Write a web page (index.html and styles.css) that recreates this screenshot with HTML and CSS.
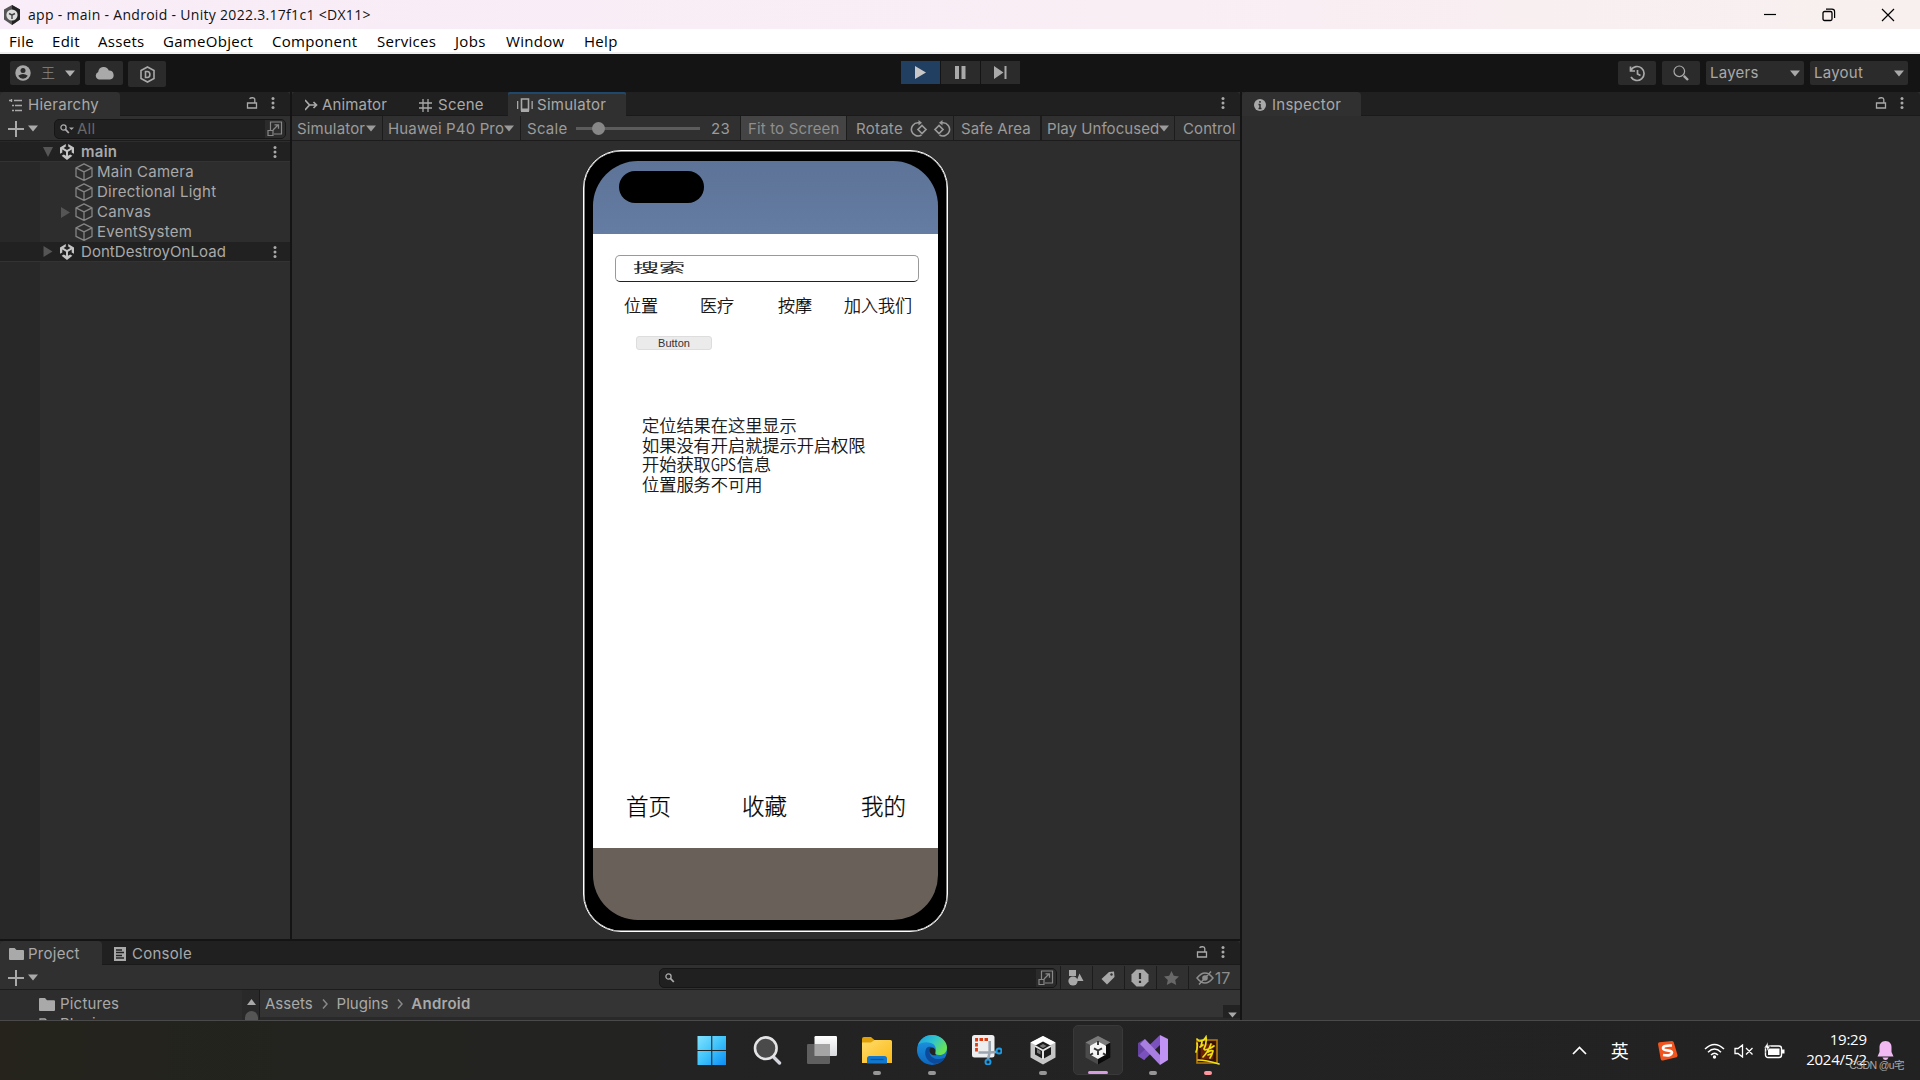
FILE: index.html
```html
<!DOCTYPE html>
<html lang="zh-CN">
<head>
<meta charset="utf-8">
<title>app - main - Android - Unity 2022.3.17f1c1</title>
<link rel="stylesheet" href="styles.css">
</head>
<body>
<svg class="defs" aria-hidden="true">
  <defs>
    <linearGradient id="gWin" x1="0" y1="0" x2="1" y2="1"><stop offset="0" stop-color="#82e2fd"/><stop offset=".5" stop-color="#3fc3fb"/><stop offset="1" stop-color="#0a8df6"/></linearGradient>
    <linearGradient id="gFolder" x1="0" y1="0" x2="1" y2="1"><stop offset="0" stop-color="#ffdc6c"/><stop offset="1" stop-color="#fbb915"/></linearGradient>
    <linearGradient id="gEdgeTop" x1="0" y1="0" x2="1" y2=".6"><stop offset="0" stop-color="#1a9be0"/><stop offset=".5" stop-color="#2fc3cf"/><stop offset="1" stop-color="#6be34f"/></linearGradient>
    <linearGradient id="gEdgeLow" x1="0" y1="0" x2="0" y2="1"><stop offset="0" stop-color="#1f9be4"/><stop offset="1" stop-color="#0d66bd"/></linearGradient>
    <linearGradient id="gWhite" x1="0" y1="0" x2="0" y2="1"><stop offset="0" stop-color="#fff"/><stop offset="1" stop-color="#d9dade"/></linearGradient>
    <symbol id="lock" viewBox="0 0 12 12"><path d="M1.500 6h9v5h-9zM3.500 1.800C5 .3 8.800 .3 8.800 2.500V6" fill="none" stroke="currentColor" stroke-width="1.300"/></symbol>
    <symbol id="kebab" viewBox="0 0 4 12"><circle cx="2" cy="1.600" r="1.500"/><circle cx="2" cy="6" r="1.500"/><circle cx="2" cy="10.400" r="1.500"/></symbol>
    <symbol id="down" viewBox="0 0 10 7"><path d="M0 .5h10L5 6.500z"/></symbol>
    <symbol id="plus" viewBox="0 0 16 16"><path d="M7 0h2v7h7v2H9v7H7V9H0V7h7z"/></symbol>
    <symbol id="find" viewBox="0 0 12 10"><circle cx="3.500" cy="3.500" r="2.600" fill="none" stroke="currentColor" stroke-width="1.300"/><path d="M5.400 5.400 8.800 9" stroke="currentColor" stroke-width="1.800"/></symbol>
    <symbol id="popout" viewBox="0 0 16 16"><path d="M3.500 9V1h11v12H7M1 9.500h5v5H1z" fill="none" stroke="currentColor" stroke-width="1.200"/><path d="M6 9l5-5M7.500 3.800h4v4" fill="none" stroke="currentColor" stroke-width="1.300"/></symbol>
    <symbol id="cube" viewBox="0 0 18 18"><path d="M9 .8 17 4.800v8.600L9 17.400 1 13.400V4.800zM1 4.800 9 8.800l8-4M9 8.800v8.600" fill="none" stroke="currentColor" stroke-width="1.300" stroke-linejoin="round"/></symbol>
    <symbol id="unity" viewBox="0 0 16 16"><path d="M6.800 0v2.600L4.600 4 8 6.100 11.400 4 9.200 2.600V0L15 3.400v6.400l-2.300-1.300V5.600L9 7.800v3.900l2.200-1.300 2.200 1.300L8 16l-5.400-4.300 2.200-1.300L7 11.700V7.800L3.300 5.600v2.900L1 9.800V3.400z"/></symbol>
    <symbol id="folder" viewBox="0 0 16 12" preserveAspectRatio="none"><path d="M0 1q0-1 1-1h5l2 2h7q1 0 1 1v8q0 1-1 1H1q-1 0-1-1z"/></symbol>
    <symbol id="crumb" viewBox="0 0 6 10"><path d="M1 .5 5 5 1 9.500" fill="none" stroke="#888" stroke-width="1.500"/></symbol>
    <symbol id="rotate" viewBox="0 0 18 18"><path d="M9.500 2.800H8a6.600 6.600 0 1 0 3.500 12.200" fill="none" stroke="currentColor" stroke-width="1.600"/><path d="M8.500 0 12 2.800 8.500 5.600z"/><path d="M12 5.500 16 9.500l-4 4-4-4z" fill="none" stroke="currentColor" stroke-width="1.700"/></symbol>
  </defs>
</svg>

<header class="titlebar">
  <svg class="app-icon" viewBox="0 0 18 20"><path d="M9 0l8 4.500v10L9 20l-8-5.500v-10z" fill="#555"/><path d="M9 0l8 4.500v10L9 20V10z" fill="#222"/><circle cx="9" cy="10" r="5.600" fill="#ddd"/><path d="M9 10v4M9 10 6 8.500M9 10l3-1.500" stroke="#444" stroke-width="1.400"/></svg>
  <span class="title-text">app - main - Android - Unity 2022.3.17f1c1 &lt;DX11&gt;</span>
  <div class="window-controls">
    <svg viewBox="0 0 14 14"><path d="M1 6.500h12" stroke="#000" stroke-width="1.200"/></svg>
    <svg viewBox="0 0 14 14"><rect x="1" y="3.500" width="9" height="9" rx="1.500" fill="none" stroke="#000" stroke-width="1.300"/><path d="M4 1.200h6q2.600 0 2.600 2.600V10" fill="none" stroke="#000" stroke-width="1.200"/></svg>
    <svg viewBox="0 0 14 14"><path d="M1 1l12 12M13 1 1 13" stroke="#000" stroke-width="1.200"/></svg>
  </div>
</header>

<nav class="menubar">
  <span>File</span><span>Edit</span><span>Assets</span><span>GameObject</span><span>Component</span><span>Services</span><span>Jobs</span><span>Window</span><span>Help</span>
</nav>

<div class="toolbar">
  <div class="tool-left">
    <div class="btn account"><svg width="16" height="16" viewBox="0 0 16 16"><circle cx="8" cy="8" r="7.700" fill="#a8a8a8"/><circle cx="8" cy="5.500" r="2.500" fill="#2a2a2a"/><path d="M3.200 10.800q4.800-3.600 9.600 0Q11 13.800 8 13.800t-4.800-3z" fill="#2a2a2a"/></svg><span>王</span><svg width="10" height="7"><use href="#down"/></svg></div>
    <div class="btn cloud"><svg width="19" height="14" viewBox="0 0 19 14"><path d="M4 13.500a4 4 0 0 1-.8-7.600 5.500 5.500 0 0 1 10.600-1.300 4.500 4.500 0 0 1 1.200 8.900z"/></svg></div>
    <div class="btn devops"><svg width="15" height="17" viewBox="0 0 15 17"><path d="M7.500 1 14 4.500v8L7.500 16 1 12.500v-8zM5.500 5.500v6h1.700q2.700 0 2.700-3t-2.700-3z" fill="none" stroke="currentColor" stroke-width="1.600"/></svg></div>
  </div>
  <div class="play-group">
    <div class="play on"><svg width="11" height="13" viewBox="0 0 11 13"><path d="M0 0l11 6.500L0 13z"/></svg></div>
    <div class="play"><svg width="11" height="13" viewBox="0 0 11 13"><path d="M0 0h4v13H0zM6.500 0h4v13h-4z"/></svg></div>
    <div class="play"><svg width="13" height="13" viewBox="0 0 13 13"><path d="M0 0l9.500 6.500L0 13zM10.500 0h2v13h-2z"/></svg></div>
  </div>
  <div class="tool-right">
    <div class="btn sq"><svg width="17" height="17" viewBox="0 0 17 17"><path d="M2 5a7 7 0 1 1 0 7M1.500 1.500V6H6M8.500 5v4l3 1.500" fill="none" stroke="currentColor" stroke-width="1.700"/></svg></div>
    <div class="btn sq"><svg width="16" height="16" viewBox="0 0 16 16"><circle cx="6.300" cy="6.300" r="5.300" fill="none" stroke="currentColor" stroke-width="1.200"/><path d="M10.800 10.800 15 15" stroke="currentColor" stroke-width="2.400"/></svg></div>
    <div class="btn drop"><span>Layers</span><svg width="10" height="7"><use href="#down"/></svg></div>
    <div class="btn drop"><span>Layout</span><svg width="10" height="7"><use href="#down"/></svg></div>
  </div>
</div>

<main class="workspace">
  <div class="left-area">
    <div class="top-panels">
      <section class="panel hierarchy">
        <div class="tabs">
          <div class="tab active"><svg width="15" height="13" viewBox="0 0 15 13"><path d="M0 1.500h3M5 1.500h8M3 6.500h2M6 6.500h7M3 11.500h2M6 11.500h7M2.500 0v3" stroke="currentColor" stroke-width="1.400"/></svg><span>Hierarchy</span></div>
          <div class="tab-tools"><svg width="12" height="12"><use href="#lock"/></svg><svg width="4" height="12"><use href="#kebab"/></svg></div>
        </div>
        <div class="panel-bar">
          <svg class="add" width="16" height="16"><use href="#plus"/></svg><svg width="10" height="7"><use href="#down"/></svg>
          <div class="search h-search"><svg width="14" height="10" viewBox="0 0 14 10"><use href="#find" width="12" height="10"/><path d="M9 3.500h5L11.500 6z"/></svg><span>All</span><div class="search-end"><svg width="16" height="16"><use href="#popout"/></svg></div></div>
        </div>
        <div class="tree">
          <div class="row scene"><svg class="arrow open" width="10" height="10" viewBox="0 0 10 10"><path d="M0 0h10L5 10z"/></svg><svg class="u" width="16" height="16"><use href="#unity"/></svg><b>main</b><svg class="more" width="4" height="12"><use href="#kebab"/></svg></div>
          <div class="row item"><i></i><svg width="18" height="18"><use href="#cube"/></svg><span>Main Camera</span></div>
          <div class="row item"><i></i><svg width="18" height="18"><use href="#cube"/></svg><span>Directional Light</span></div>
          <div class="row item"><i><svg width="9" height="11" viewBox="0 0 9 11"><path d="M0 0l9 5.500L0 11z"/></svg></i><svg width="18" height="18"><use href="#cube"/></svg><span>Canvas</span></div>
          <div class="row item"><i></i><svg width="18" height="18"><use href="#cube"/></svg><span>EventSystem</span></div>
          <div class="row scene persistent"><svg class="arrow" width="9" height="11" viewBox="0 0 9 11"><path d="M0 0l9 5.500L0 11z"/></svg><svg class="u" width="16" height="16"><use href="#unity"/></svg><span>DontDestroyOnLoad</span><svg class="more" width="4" height="12"><use href="#kebab"/></svg></div>
        </div>
      </section>

      <section class="panel simulator">
        <div class="tabs">
          <div class="tab t-anim"><svg width="13" height="12" viewBox="0 0 13 12"><path d="M0 1l4.500 5L0 11M4 6h8M8.500 3l3 3-3 3" fill="none" stroke="currentColor" stroke-width="1.700"/></svg><span>Animator</span></div>
          <div class="tab t-scene"><svg width="13" height="13" viewBox="0 0 13 13"><path d="M4 0v13M9 0v13M0 4h13M0 9h13" stroke="currentColor" stroke-width="1.300"/></svg><span>Scene</span></div>
          <div class="tab active focus t-sim"><svg width="16" height="14" viewBox="0 0 16 14"><path d="M4.500 1h7v11h-7z" fill="none" stroke="currentColor" stroke-width="1.600"/><path d="M4 10.500h8V14H4zM0 3h1.300v8H0zM14.500 3h1.300v8h-1.300z"/></svg><span>Simulator</span></div>
          <div class="tab-tools"><svg width="4" height="12"><use href="#kebab"/></svg></div>
        </div>
        <div class="sim-bar">
          <div class="c-mode"><span>Simulator</span><svg width="10" height="7"><use href="#down"/></svg></div>
          <div class="c-device"><span>Huawei P40 Pro</span><svg width="10" height="7"><use href="#down"/></svg></div>
          <div class="c-scale"><span>Scale</span><div class="slider"><div class="knob"></div></div><span>23</span></div>
          <div class="c-fit">Fit to Screen</div>
          <div class="c-rotate"><span>Rotate</span><svg width="18" height="18"><use href="#rotate"/></svg><svg class="flip" width="18" height="18"><use href="#rotate"/></svg></div>
          <div class="c-safe">Safe Area</div>
          <div class="c-play"><span>Play Unfocused</span><svg width="10" height="7"><use href="#down"/></svg></div>
          <div class="c-control">Control</div>
        </div>
        <div class="stage">
          <div class="phone">
            <div class="screen">
              <div class="sky"><div class="notch"></div></div>
              <div class="app">
                <div class="app-search"><span>搜索</span></div>
                <div class="app-nav"><span>位置</span><span>医疗</span><span>按摩</span><span>加入我们</span></div>
                <div class="app-button">Button</div>
                <div class="log">定位结果在这里显示<br>如果没有开启就提示开启权限<br>开始获取<span class="gps">GPS</span>信息<br>位置服务不可用</div>
                <div class="app-tabs"><span>首页</span><span>收藏</span><span>我的</span></div>
              </div>
              <div class="ground"></div>
            </div>
          </div>
        </div>
      </section>
    </div>

    <section class="panel project">
      <div class="tabs">
        <div class="tab active t-proj"><svg width="15" height="12"><use href="#folder"/></svg><span>Project</span></div>
        <div class="tab t-console"><svg width="12" height="14" viewBox="0 0 12 14"><path d="M0 0h12v14H0z"/><path d="M2 3h6M2 5.500h8M2 8.500h6M2 11h8" stroke="#222" stroke-width="1.300"/></svg><span>Console</span></div>
        <div class="tab-tools"><svg width="12" height="12"><use href="#lock"/></svg><svg width="4" height="12"><use href="#kebab"/></svg></div>
      </div>
      <div class="panel-bar">
        <svg class="add" width="16" height="16"><use href="#plus"/></svg><svg width="10" height="7"><use href="#down"/></svg>
        <div class="search p-search"><svg width="12" height="10"><use href="#find"/></svg><div class="search-end"><svg width="16" height="16"><use href="#popout"/></svg></div></div>
        <div class="filters">
          <div><svg width="16" height="16" viewBox="0 0 16 16"><path d="M1 0h7v6H1zM11.500 3.500 15.500 11H8.500z"/><circle cx="5" cy="11" r="4.600"/></svg></div>
          <div><svg width="14" height="14" viewBox="0 0 14 14"><path d="M8 1l5-.5L13.500 6 6 13.500.5 8z"/><circle cx="10.500" cy="3.500" r="1.200" fill="#333"/></svg></div>
          <div><svg width="18" height="18" viewBox="0 0 18 18"><path d="M5.500 0.500h7l5 5v7l-5 5h-7l-5-5v-7z"/><path d="M9 4v6M9 11.800v2.200" stroke="#2e2e2e" stroke-width="2.200"/></svg></div>
          <div class="dim"><svg width="15" height="14" viewBox="0 0 15 14"><path d="M7.500 0l2.300 4.800 5.200.6-3.800 3.600 1 5-4.700-2.500L2.800 14l1-5L0 5.400l5.200-.6z"/></svg></div>
          <div class="hidden-count"><svg width="18" height="14" viewBox="0 0 18 14"><path d="M1 7q8-10 16 0-8 10-16 0zM3 13.500 15 .5" fill="none" stroke="currentColor" stroke-width="1.500"/><circle cx="9" cy="7" r="2.800"/></svg><span>17</span></div>
        </div>
      </div>
      <div class="project-body">
        <div class="folders">
          <div class="f-row"><svg width="16" height="13"><use href="#folder"/></svg><span>Pictures</span></div>
          <div class="f-row"><svg width="16" height="13" viewBox="0 0 16 13"><path d="M1 12V1h5l2 2h7v9z" fill="none" stroke="currentColor" stroke-width="1.300"/></svg><span>Plugins</span></div>
        </div>
        <div class="scroll"><svg width="9" height="6" viewBox="0 0 9 6"><path d="M0 6h9L4.500 0z"/></svg><div class="thumb"></div></div>
        <div class="crumbs"><span>Assets</span><svg width="6" height="10"><use href="#crumb"/></svg><span>Plugins</span><svg width="6" height="10"><use href="#crumb"/></svg><b>Android</b><div class="corner"><svg width="9" height="6"><use href="#down"/></svg></div></div>
      </div>
    </section>
  </div>

  <section class="panel inspector">
    <div class="tabs">
      <div class="tab active"><svg width="12" height="12" viewBox="0 0 12 12"><circle cx="6" cy="6" r="6"/><path d="M6 2v1.800M6 5v5M4.500 5.500H6M4.500 9.500h3" stroke="#2f2f2f" stroke-width="1.500"/></svg><span>Inspector</span></div>
      <div class="tab-tools"><svg width="12" height="12"><use href="#lock"/></svg><svg width="4" height="12"><use href="#kebab"/></svg></div>
    </div>
  </section>
</main>

<footer class="taskbar">
  <div class="dock">
    <div class="app-slot"><svg viewBox="0 0 30 30"><path d="M0.500 1h13.700v14H.5zM15.300 1H29v14H15.300zM.5 16h13.700v14H.5zM15.300 16H29v14H15.300z" fill="url(#gWin)"/></svg></div>
    <div class="app-slot"><svg viewBox="0 0 30 30"><path d="M20 20.500 27.500 28" stroke="#d4d5dc" stroke-width="3.400" stroke-linecap="round"/><circle cx="13.800" cy="13.200" r="10.800" fill="#4a4a4a" stroke="#e4e4e6" stroke-width="2.600"/></svg></div>
    <div class="app-slot"><svg viewBox="0 0 30 30"><rect x="7.500" y="1" width="22.500" height="20" rx="1.200" fill="url(#gWhite)"/><rect x="0" y="9" width="23" height="20" rx="1.200" fill="#666" opacity=".9"/><path d="M7.500 9H23v12H7.500z" fill="#a5a5a5"/></svg></div>
    <div class="app-slot running"><svg viewBox="0 0 30 30"><path d="M0 4q0-2 2-2h7l4 3.500V10H0z" fill="#e0a008"/><path d="M0 7.500h9L12.500 5H28.500q1.500 0 1.500 1.500V28H0z" fill="url(#gFolder)"/><path d="M5 28.500v-5q0-2.500 2.500-2.500h15q2.500 0 2.500 2.500v5z" fill="#1277cd"/><path d="M8.500 24.500h13" stroke="#075596" stroke-width="1.200"/></svg></div>
    <div class="app-slot running"><svg viewBox="0 0 30 30"><circle cx="15" cy="15" r="15" fill="url(#gEdgeLow)"/><path d="M1 10C3 4 9 0 15 0c8 0 15 6 15 12.500 0 5-3.500 7.500-7.500 7.500-3.500 0-5-1.600-4.500-3 2-3 .5-7.500-4-9C9 6.500 4 7.500 1 10z" fill="url(#gEdgeTop)"/><path d="M9.500 13c-3 5-1 13 7 15.500 5 1 9-1.500 11-6-7 3.500-14 1-15-5-.3-2.500 1-4.500 2.500-5.500-2-.5-4-.5-5.500 1z" fill="#0c4b9c"/><path d="M13 13.500c2-2 6-.5 5.500 3.500q-1 2 .8 3.200C14 21 11 17 13 13.500z" fill="#202324"/></svg></div>
    <div class="app-slot"><svg viewBox="0 0 30 30"><rect width="22.500" height="22.500" rx="2.500" fill="#eceef0"/><path d="M16 4.500H4.500v12" fill="none" stroke="#da3b10" stroke-width="2.800" stroke-dasharray="3.500 1.500"/><path d="M17.700 6v11.500L16 24M6.500 17.500H18L24 17" fill="none" stroke="#9aa5af" stroke-width="2.600"/><circle cx="27" cy="16" r="2.500" fill="none" stroke="#1b9be5" stroke-width="2"/><circle cx="16" cy="27" r="2.500" fill="none" stroke="#1b9be5" stroke-width="2"/></svg></div>
    <div class="app-slot running"><svg viewBox="0 0 30 30"><path d="M15 1l12.500 6.500v15L15 29.500 2.500 22.500v-15z" fill="#c6c6c6"/><path d="M15 1l12.500 6.500L15 14 2.500 7.500z" fill="#fff"/><path d="M15 6.500l8 4.300v8.700L15 24l-8-4.500v-8.700z" fill="#1c1c1c"/><path d="M15 15.500V24M15 15.500 7 11M15 15.500l8-4.500" fill="none" stroke="#e4e4e4" stroke-width="2"/><path d="M15 9l3.500 2L15 13l-3.500-2zM9 14l3.500 2v3.500L9 17.800z" fill="#777"/></svg></div>
    <div class="app-slot current"><svg viewBox="0 0 30 30"><path d="M15 1l12.500 6.500v15L15 29.500 2.500 22.500v-15z" fill="#4b4b4b"/><path d="M15 1l12.500 6.500L15 14 2.500 7.500z" fill="#7a7a7a"/><path d="M27.500 7.500v15L15 29.500V15z" fill="#0a0a0a"/><path d="M15 6.500l8 4.300v8.700L15 24l-8-4.500v-8.700z" fill="#f4f4f4"/><path d="M15 15.500v4.500M15 15.500l-4-2.200M15 15.500l4-2.200M15 6v4M7 20l3-1.700M23 20l-3-1.700" stroke="#333" stroke-width="1.900"/></svg></div>
    <div class="app-slot running"><svg viewBox="0 0 30 30"><path d="M0 8l7-4v21l-7-4z" fill="#65429f"/><path d="M0 21 22 0v10L6 25z" fill="#7b52bd"/><path d="M2 9l5-5 15 16v10z" fill="#a87ee0"/><path d="M22 0l8 4v21l-8 5z" fill="#c093f5"/></svg></div>
    <div class="app-slot running alert"><svg viewBox="0 0 30 30"><path d="M4 5h20v23H4z" fill="#3c1608" stroke="#b77b0c" stroke-width="1.600"/><path d="M7 8h14v17H7z" fill="#6b2108" stroke="#1c0b05"/><path d="M4 4l2 2M4 8q1 4-1 9M7 6q4 0 6-4 1 6-2 12M9 7l-1 4M7 12l3-2M12 15q5-1 9-4M18 9q-3 8-8 13M15 17q3-2 5-1-1 4-3 7M15 20l3-1M5 25q8 0 21 4" fill="none" stroke="#ede116" stroke-width="1.700" stroke-linecap="round"/></svg></div>
  </div>
  <div class="tray">
    <svg class="chev" width="15" height="9" viewBox="0 0 15 9"><path d="M1 8l6.500-6.500L14 8" fill="none" stroke="#fff" stroke-width="1.700"/></svg>
    <span class="ime">英</span>
    <svg class="sogou" width="21" height="20" viewBox="0 0 21 20"><path d="M1 3q0-1.500 1.500-1.800L15 0q1.500 0 1.800 1.500L20.500 14q.3 1.500-1 2.200L6 19.500q-2 .3-2.300-1.500z" fill="#f1541c"/><path d="M15 4.500Q6 4 6 7.200c0 3.300 9 1 9 4.300Q14.500 15.500 6 14" fill="none" stroke="#fff" stroke-width="2.600"/></svg>
    <svg class="wifi" width="21" height="16" viewBox="0 0 21 16"><path d="M1 6q9.500-9 19 0M4 9.200q6.500-6.400 13 0M7 12q3.500-3.500 7 0" fill="none" stroke="#fff" stroke-width="1.500"/><circle cx="10.500" cy="14" r="1.700" fill="#fff"/></svg>
    <svg class="sound" width="20" height="14" viewBox="0 0 20 14"><path d="M1 4.500h3L8.500 1v12L4 9.500H1zM12 4l6.500 6.500M18.500 4 12 10.500" fill="none" stroke="#fff" stroke-width="1.300"/></svg>
    <svg class="battery" width="21" height="17" viewBox="0 0 21 17"><rect x="1.500" y="4" width="16" height="11.500" rx="2.500" fill="none" stroke="#fff" stroke-width="1.400"/><path d="M4 6.500h11.500V13H4zM18 7.500h2.500v4H18z" fill="#fff"/><path d="M4 0 0 6h3l-1 4.500L6.500 4H4z" fill="#fff" stroke="#222" stroke-width=".5"/></svg>
    <div class="clock"><span>19:29</span><span>2024/5/2</span></div>
    <svg class="bell" width="17" height="19" viewBox="0 0 17 19"><path d="M8.500 0C4.500 0 2.500 3 2.500 6v5L.5 15.500h16l-2-4.500V6c0-3-2-6-6-6zM5.500 16.500h6q-1 2.500-3 2.500t-3-2.500z" fill="#f0b9f2"/></svg>
    <span class="watermark">CSDN @u宅</span>
  </div>
</footer>
</body>
</html>
```
FILE: styles.css
```css
* { box-sizing: border-box; }
body {
  margin: 0;
  width: 1920px;
  height: 1080px;
  overflow: hidden;
  display: flex;
  flex-direction: column;
  background: #141414;
  color: #a9a9a9;
  font: 15px/20px Inter, "Noto Sans CJK SC", sans-serif;
  letter-spacing: .26px;
  white-space: nowrap;
}
svg { display: block; flex: none; fill: currentColor; }
.defs { position: absolute; width: 0; height: 0; }

/* title and menu */
.titlebar {
  height: 29px;
  display: flex;
  align-items: center;
  padding: 0 25px 0 3px;
  background: linear-gradient(90deg, #f8edf8, #f9eef4 60%, #f8f0ef);
  color: #111;
  font: 14px/20px "Open Sans", sans-serif;
  letter-spacing: .3px;
}
.app-icon { width: 18px; height: 20px; }
.title-text { margin-left: 7px; }
.window-controls { display: flex; gap: 45px; margin-left: auto; }
.window-controls svg { width: 14px; height: 14px; }
.menubar {
  height: 25px;
  display: grid;
  grid-template-columns: 43px 46px 65px 109px 105px 78px 51px 78px auto;
  padding-left: 9px;
  background: #fff;
  border-bottom: 2px solid #eee;
  color: #000;
  font: 15px/25px "Open Sans", sans-serif;
  letter-spacing: .3px;
}

/* main toolbar */
.toolbar { height: 38px; display: flex; padding: 7px 12px 0 10px; }
.tool-left { display: flex; gap: 5px; width: 891px; }
.btn {
  height: 24px;
  display: flex;
  align-items: center;
  justify-content: center;
  background: #2b2b2b;
  border-radius: 2px;
}
.account { width: 70px; gap: 10px; font-size: 14px; color: #b0b0b0; }
.account span { letter-spacing: 0; color: #888; font-weight: 300; }
.cloud { width: 38px; }
.devops { width: 38px; height: 26px; }
.play-group { display: flex; gap: 1px; }
.play { width: 39px; height: 23px; display: flex; align-items: center; justify-content: center; background: #2b2b2b; }
.play.on { background: #203f61; color: #c8c8c8; }
.tool-right { display: flex; gap: 6px; margin-left: auto; }
.sq { width: 38px; }
.drop { width: 98px; justify-content: space-between; padding: 0 4px; }

/* panels */
.workspace { height: 928px; display: flex; gap: 2px; }
.left-area { width: 1240px; display: flex; flex-direction: column; gap: 2px; }
.top-panels { height: 847px; display: flex; gap: 2px; }
.panel { display: flex; flex-direction: column; background: #2d2d2d; overflow: hidden; }
.hierarchy { width: 290px; }
.simulator { width: 948px; }
.inspector { width: 678px; }
.tabs { height: 24px; display: flex; background: #202020; border-bottom: 1px solid #1a1a1a; border-radius: 4px 4px 0 0; flex: none; }
.tab { display: flex; align-items: center; height: 24px; padding-top: 2px; }
.tab.active { background: #303030; border-radius: 4px 4px 0 0; }
.tab.focus { box-shadow: inset 0 2px #20486c; border-radius: 2px 2px 0 0; }
.tab-tools { display: flex; gap: 13px; margin: 5px 15px 0 auto; }
.hierarchy .tab { width: 120px; padding-left: 9px; gap: 4px; }
.inspector .tab { width: 119px; padding-left: 12px; gap: 6px; }
.inspector .tab-tools { margin-right: 16px; }
.t-anim { width: 114px; padding-left: 13px; gap: 4px; letter-spacing: .15px; }
.t-scene { width: 102px; padding-left: 13px; gap: 6px; }
.t-sim { width: 118px; padding-left: 9px; gap: 4px; }
.t-proj { width: 102px; padding-left: 9px; gap: 4px; }
.t-console { padding-left: 12px; gap: 6px; }
.panel-bar { height: 25px; display: flex; align-items: center; padding: 1px 0 0 8px; gap: 4px; background: #303030; border-bottom: 1px solid #1c1c1c; flex: none; }
.search { height: 20px; display: flex; align-items: center; padding-left: 5px; background: #202020; border: 1px solid #161616; border-radius: 5px; color: #aaa; }
.search span { margin-left: 3px; color: #686868; }
.search-end { margin-left: auto; width: 20px; height: 18px; display: flex; align-items: center; justify-content: center; background: #2b2b2b; border-radius: 0 4px 4px 0; color: #888; }
.h-search { width: 232px; margin-left: 12px; }
.p-search { width: 398px; margin-left: 617px; }

/* hierarchy tree */
.tree { flex: 1; padding-top: 1px; background: linear-gradient(90deg, #282828 40px, #2d2d2d 40px); }
.row { height: 20px; display: flex; align-items: center; }
.scene { padding: 0 13px 0 43px; background: #212121; border-bottom: 1px solid #333; }
.scene .arrow { width: 10px; color: #555; }
.scene .u { margin: 0 6px; color: #c4c4c4; }
.scene .more { margin-left: auto; }
.scene b { font-weight: 600; }
.persistent { letter-spacing: .05px; }
.item i { width: 75px; padding-left: 61px; color: #555; }
.item svg { color: #858585; }
.item i svg { color: #555; }
.item span { margin-left: 4px; }

/* simulator */
.sim-bar { height: 25px; display: flex; background: #303030; border-bottom: 1px solid #1c1c1c; flex: none; color: #9b9b9b; }
.sim-bar > div { display: flex; align-items: center; border-right: 1px solid #1c1c1c; padding-top: 1px; }
.sim-bar .c-mode, .sim-bar .c-device, .sim-bar .c-play { justify-content: space-between; padding: 1px 6px 0 5px; letter-spacing: .15px; }
.c-mode { width: 91px; }
.c-device { width: 138px; }
.c-scale { width: 220px; padding-left: 6px; }
.slider { width: 124px; height: 3px; margin: 0 11px 0 auto; background: #5c5c5c; }
.c-scale span:last-child { width: 29px; }
.knob { width: 13px; height: 13px; margin: -5px 0 0 16px; border-radius: 50%; background: #878787; }
.c-fit { width: 106px; padding-left: 7px; background: #444; color: #8e8e8e; letter-spacing: .15px; }
.c-rotate { width: 107px; padding-left: 9px; gap: 7px; }
.c-rotate svg + svg { margin-left: -2px; }
.flip { transform: scaleX(-1); }
.c-safe { width: 87px; padding-left: 7px; letter-spacing: .05px; }
.sim-bar .c-play { width: 134px; border-left: 1px solid #1c1c1c; margin-left: 0; letter-spacing: .05px; }
.sim-bar > .c-control { padding-left: 8px; border: 0; letter-spacing: .1px; }
.stage { flex: 1; padding: 9px 0 0 291px; }
.phone { width: 365px; height: 782px; padding: 10px 9px; background: #000; border: 1px solid #fff; box-shadow: inset 0 0 0 .5px #fff; border-radius: 38px; }
.screen { width: 345px; height: 759px; border-radius: 45px; overflow: hidden; }
.sky { height: 73px; padding: 10px 0 0 26px; background: linear-gradient(#5d7397, #657ca3); }
.notch { width: 85px; height: 32px; border-radius: 16px; background: #000; }
.app { height: 614px; display: flex; flex-direction: column; background: #fff; color: #000; font-family: "Noto Sans CJK SC", sans-serif; font-weight: 300; letter-spacing: 0; -webkit-text-stroke: .25px #000; }
.app-search { width: 304px; height: 27px; margin: 21px 0 0 22px; padding: 0 0 0 17px; border: 1px solid #999; border-bottom-color: #222; border-radius: 5px; font-size: 14px; line-height: 21px; color: #111; }
.app-search span { display: inline-block; transform: scale(1.860, .92); transform-origin: 0 50%; }
.app-nav { display: grid; grid-template-columns: 76px 78px 66px auto; margin: 11px 0 0 31px; font-size: 17px; line-height: 24px; }
.app-button { width: 76px; height: 14px; margin: 19px 0 0 43px; background: #ebebeb; border: 1px solid #ddd; border-radius: 3px; font: 11px/12px "Liberation Sans", sans-serif; text-align: center; color: #333; -webkit-text-stroke: 0; }
.log { margin: 65px 0 0 49px; font-size: 17.200px; line-height: 19.700px; }
.gps { display: inline-block; width: 26px; height: 19px; transform: scaleX(.78); transform-origin: 0 50%; }
.app-tabs { display: grid; grid-template-columns: 116px 119px auto; margin: auto 0 27px 33px; font-size: 22.500px; line-height: 32px; }
.ground { height: 72px; background: #69605a; }

/* project */
.project { height: 79px; }
.filters { display: flex; height: 24px; margin-left: -1px; }
.filters > div { width: 32px; display: flex; align-items: center; justify-content: center; border-left: 1px solid #1c1c1c; padding-right: 2px; }
.filters .dim { color: #686868; }
.filters .hidden-count { width: 51px; gap: 1px; color: #8d8d8d; letter-spacing: 0; font-size: 16px; }
.project-body { height: 30px; display: flex; overflow: hidden; }
.folders { width: 242px; padding: 4px 0 0 39px; }
.f-row { height: 20px; display: flex; align-items: center; gap: 5px; letter-spacing: .2px; }
.scroll { width: 17px; padding: 9px 0 0 5px; background: #292929; }
.thumb { width: 13px; height: 20px; margin: 6px 0 0 -2px; border-radius: 7px; background: #555; }
.crumbs { flex: 1; display: flex; align-items: center; padding: 1px 0 0 5px; gap: 9px; background: #343434; border-left: 1px solid #1a1a1a; border-bottom: 3px solid #292929; }
.crumbs span { letter-spacing: 0; }
.crumbs b { font-weight: 600; margin-left: -1px; }
.corner { width: 17px; height: 13px; margin: 15px 0 0 auto; padding: 7px 0 0 5px; background: #222; }

/* taskbar */
.taskbar { height: 60px; display: flex; border-top: 1px solid #4a4a4a; background: linear-gradient(90deg, #25231c, #23231f 15%, #232323 35%, #222); }
.dock { display: flex; gap: 5.100px; margin-left: 687px; padding-top: 4px; }
.app-slot { width: 50px; height: 50px; display: flex; flex-direction: column; align-items: center; padding-top: 10px; border-radius: 5px; }
.app-slot svg { width: 30px; height: 30px; }
.app-slot::after { content: ""; width: 8px; height: 4px; margin-top: 6px; border-radius: 2px; }
.running::after { background: #969696; }
.current { background: #303030; border: 1px solid #393939; padding-top: 9px; }
.current::after { width: 20px; background: #d69ce0; }
.alert::after { background: #ff969d; }
.tray { flex: 1; display: grid; grid-template-columns: 39px 46px 47px 30px 30px 20px 83px 25px; align-items: center; margin-left: 339px; color: #fff; position: relative; }
.ime { font: 18px/20px "Noto Sans CJK SC", sans-serif; margin-top: -2px; }
.clock { display: flex; flex-direction: column; align-items: flex-end; font: 15px/20px "Open Sans", sans-serif; letter-spacing: -.22px; margin-top: -4px; }
.bell { margin-left: 10px; }
.watermark { position: absolute; right: 16px; bottom: 7px; color: #aaa; font: 10.500px/16px "Liberation Sans", "Noto Sans CJK SC", sans-serif; letter-spacing: -.6px; }
```
